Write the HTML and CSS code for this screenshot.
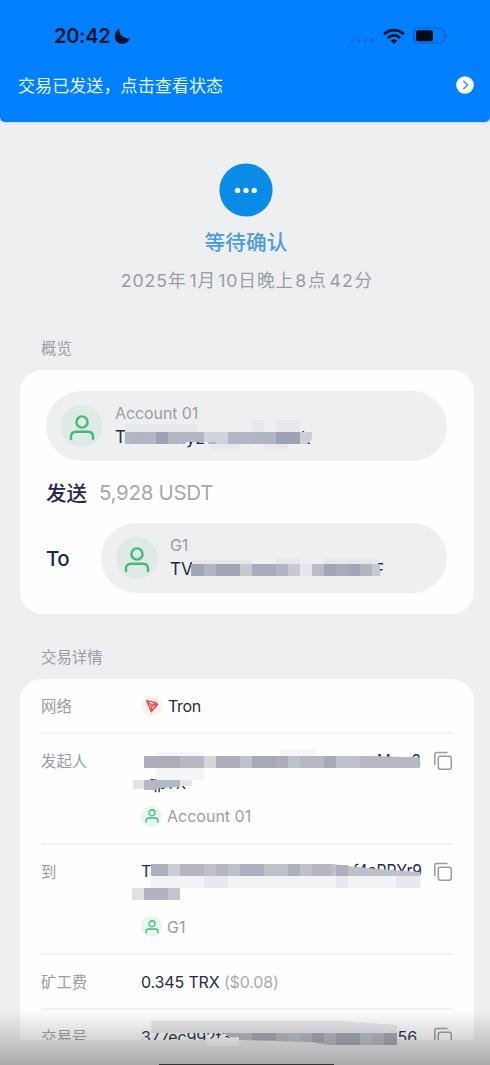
FILE: index.html
```html
<!DOCTYPE html>
<html lang="zh-CN">
<head>
<meta charset="utf-8">
<title>交易详情</title>
<link rel="stylesheet" href="styles.css">
</head>
<body>
<svg class="defs" width="0" height="0">
  <symbol id="user" viewBox="0 0 26 26"><g fill="none" stroke="currentColor" stroke-width="2.4" stroke-linecap="round"><circle cx="13" cy="7" r="5.6"/><path d="M2 24v-2.5c0-3 2-4.8 5-4.8h12c3 0 5 1.800 5 4.800v2.500"/></g></symbol>
  <symbol id="copy" viewBox="0 0 20 20"><g fill="none" stroke="#9a9ba0" stroke-width="1.5"><path d="M1.800 14V3.300q0-1.800 1.800-1.800H14.500"/><rect x="5.300" y="5.300" width="13" height="13" rx="2.200"/></g></symbol>
</svg>
<div class="screen">
  <header class="header">
    <div class="status">
      <div class="clock">20:42
        <svg width="17" height="17" viewBox="0 0 17 17"><path d="M5.200.8C4.800 6 9 11.200 16.200 10.300 14.500 14.200 11.500 16 8.300 16 4 16 .8 12.700.8 8.500.8 5 2.500 2.200 5.200.8Z" fill="#07142b"/></svg>
      </div>
      <div class="signals">
        <svg width="26" height="6" viewBox="0 0 26 6" fill="#0865c6"><circle cx="3" cy="3" r="1.700"/><circle cx="9.500" cy="3" r="1.700"/><circle cx="16.500" cy="3" r="1.700"/><circle cx="23" cy="3" r="1.700"/></svg>
        <svg class="wifi" width="22" height="17" viewBox="0 0 22 17"><g fill="none" stroke="#07142b" stroke-width="2.700"><path d="M1.200 6.200C6.700.8 15.300.8 20.800 6.200"/><path d="M4.800 10C8.300 6.600 13.700 6.600 17.200 10"/></g><path d="M7.700 12.500Q11 9.800 14.300 12.500L11 16Z" fill="#07142b"/></svg>
        <svg width="36" height="18" viewBox="0 0 36 18"><rect x="1" y="1.200" width="30.500" height="15" rx="4.700" fill="none" stroke="#075fc0" stroke-width="1.300"/><rect x="3" y="3.300" width="17" height="11" rx="2.500" fill="#030b18"/><path d="M33 6.300q2.300 2.500 0 5z" fill="#075fc0"/></svg>
      </div>
    </div>
    <div class="notice">
      <span class="notice-text">交易已发送，点击查看状态</span>
      <svg width="18" height="18" viewBox="0 0 18 18"><circle cx="9" cy="9" r="8.800" fill="#fff"/><path d="M7.300 4.800 11.500 9l-4.200 4.200" fill="none" stroke="#4295da" stroke-width="1.500"/></svg>
    </div>
  </header>

  <main class="main">
    <section class="state">
      <svg class="pending" width="54" height="54" viewBox="0 0 54 54"><circle cx="27" cy="27" r="26.600" fill="#0a8ce6"/><g fill="#fff"><circle cx="18.600" cy="27.400" r="2.600"/><circle cx="27" cy="27.400" r="2.600"/><circle cx="35.200" cy="27.400" r="2.600"/></g></svg>
      <h1 class="state-title">等待确认</h1>
      <p class="date"><span class="y">2025年</span><span class="m">1月</span><span class="d">10日</span><span class="e">晚上</span><span class="h">8</span><span class="p">点</span><span class="n">42</span><span>分</span></p>
    </section>

    <h2 class="section-title">概览</h2>
    <section class="card overview">
      <div class="pill">
        <span class="avatar"><svg width="26" height="26"><use href="#user"/></svg></span>
        <div class="party">
          <span class="name">Account 01</span>
          <span class="address">T
            <svg class="mask" width="204" height="36" viewBox="0 0 204 36">
              <text x="66" y="20" class="mask-text">.yz</text><text x="186" y="20" class="mask-text">k</text>
              <path d="M10 0h72v8H10zM137 -4h12v12h-12zM161 -4h24v12h-24zM95 20h30v5H95zM149 20h24v5h-24z" fill="#e7e7ed"/>
              <path d="M10 8h187v6l-4 4-3 2H93V18H72l-4 2H10z" fill="#b3b6c3"/>
              <path d="M17 8h12v12H17zM137 8h24v12h-24z" fill="#b0b5c6"/><path d="M41 8h12v12H41zM161 8h24v12h-24z" fill="#9da1b2"/>
              <path d="M89 8h12v10H89zM101 8h12v12h-12z" fill="#cfd2db"/><path d="M185 8h12v7l-5 5h-7z" fill="#cfced9"/>
            </svg>
          </span>
        </div>
      </div>
      <div class="amount-row"><b>发送</b><span class="amount">5,928 USDT</span></div>
      <div class="to-row">
        <b class="to">To</b>
        <div class="pill pill-to">
          <span class="avatar"><svg width="26" height="26"><use href="#user"/></svg></span>
          <div class="party">
            <span class="name">G1</span>
            <span class="address">TV
              <svg class="mask" width="216" height="36" viewBox="0 0 216 36">
                <text x="204" y="20" class="mask-text">F</text>
                <path d="M22 4h60v4H22zM106 3h24v5h-24zM154 3h54v5h-54z" fill="#e6e7ea"/>
                <path d="M21 8h189v12H21z" fill="#aaabba"/><path d="M34 8h12v12H34zM106 8h12v12h-12zM190 8h12v12h-12z" fill="#b3b5c3"/><path d="M22 8h12v12H22zM46 8h24v12H46zM154 8h12v12h-12zM178 8h12v12h-12z" fill="#a3a6b6"/><path d="M70 8h12v12H70zM118 8h12v12h-12zM202 8h8v12h-8z" fill="#c6c8d2"/><path d="M130 8h12v12h-12z" fill="#e5e5ea"/><path d="M142 8h12v12h-12z" fill="#bcbbc8"/>
              </svg>
            </span>
          </div>
        </div>
      </div>
    </section>

    <h2 class="section-title details-title">交易详情</h2>
    <section class="card details">
      <div class="row">
        <span class="label">网络</span>
        <div class="entry tron"><svg width="22" height="22" viewBox="0 0 22 22"><circle cx="11" cy="11" r="10.500" fill="#fdf0ed"/><path d="M5.600 5.700 14.300 7.300 16.800 9.200 10.300 16.700ZM5.600 5.700 11.100 10.700 16.800 9.200M14.300 7.300 11.100 10.700 10.300 16.700" fill="#edaaa5" stroke="#d85455" stroke-width="1.300" stroke-linejoin="round"/></svg><span class="dark">Tron</span></div>
      </div>
      <div class="row tall">
        <span class="label">发起人</span>
        <div class="value">
          <div class="hash">
            <svg class="mask" width="300" height="54" viewBox="0 0 300 54">
              <text x="236" y="18" class="mask-text" textLength="44" lengthAdjust="spacingAndGlyphs">Mxw3</text><text x="7" y="40" class="mask-text" textLength="38" lengthAdjust="spacingAndGlyphs">qpYK</text>
              <path d="M15 3h48v4H15zM15 19h36v12H15zM51 19h12v12H51zM139 0h36v7h-36z" fill="#f5f5f8"/>
              <path d="M3 7h230l46 1.500v10.500H3z" fill="#b7b8c4"/><path d="M3 7h36v12H3zM75 7h24v12H75zM135 7h12v12h-12z" fill="#adaeba"/><path d="M111 7h12v12h-12zM123 7h12v12h-12zM183 7h12v12h-12z" fill="#a8a9b8"/><path d="M63 7h12v12H63z" fill="#d4d5dd"/><path d="M99 7h12v12H99zM147 7h12v12h-12zM195 7h24v12h-24z" fill="#bfc2cc"/>
              <path d="M-8 31H3v9H-8zM39 31h12v6H39z" fill="#e3e3e8"/><path d="M3 31h36v7l-20 1-6 2H3z" fill="#b6b7c4"/>
            </svg>
          </div>
          <div class="entry owner"><span class="mini"><svg width="14" height="14"><use href="#user"/></svg></span><span>Account 01</span></div>
        </div>
        <svg class="copy" width="20" height="20"><use href="#copy"/></svg>
      </div>
      <div class="row tall">
        <span class="label">到</span>
        <div class="value">
          <div class="hash dark">T
            <svg class="mask" width="300" height="54" viewBox="0 0 300 54">
              <text x="212" y="17" class="mask-text" textLength="69" lengthAdjust="spacingAndGlyphs">f4aPPYr9</text>
              <path d="M10 16h270v12H10z" fill="#f3f3f5"/><path d="M63 16h24v12H63zM195 16h12v12h-12zM255 16h24v12h-24z" fill="#e9e9ed"/>
              <path d="M10 4h181l24 3 21 2 43 3v4H10z" fill="#bec0ca"/><path d="M10 4h17v12H10zM99 4h12v12H99zM111 4h12v12h-12zM147 4h12v12h-12zM195 5h12v11h-12z" fill="#adafbc"/><path d="M39 4h24v12H39zM75 4h12v12H75zM171 4h20v12h-20z" fill="#b6b6c3"/><path d="M27 4h12v12H27z" fill="#cbcdd4"/>
              <path d="M-9 28H3v12H-9z" fill="#e1e1e4"/><path d="M3 28h24v12H3z" fill="#b2b2c1"/><path d="M27 28h12v12H27z" fill="#c4c5ce"/>
            </svg>
          </div>
          <div class="entry owner"><span class="mini"><svg width="14" height="14"><use href="#user"/></svg></span><span>G1</span></div>
        </div>
        <svg class="copy" width="20" height="20"><use href="#copy"/></svg>
      </div>
      <div class="row">
        <span class="label">矿工费</span>
        <div class="fee"><span class="dark">0.345 TRX</span> <span class="fiat">($0.08)</span></div>
      </div>
      <div class="row last">
        <span class="label">交易号</span>
        <div class="value"><div class="hash dark txid"><span class="tx-start">377ec992f3d</span><span>56</span>
          <svg class="mask" width="300" height="54" viewBox="0 0 300 54">
            <path d="M10 -4h190l56 4v8H10z" fill="#e9e9ec"/><path d="M82 8h174v12H188l-18-3-72-2-8-3z" fill="#b5b6c1"/><path d="M66 14 98 12v9H66z" fill="#fdfdfe"/><path d="M111 8h24v7h-24zM171 8h12v9h-12zM195 8h24v12h-24zM243 8h13v12h-13z" fill="#a4a5b1"/><path d="M147 8h12v8h-12zM219 8h12v12h-12z" fill="#bfc1ca"/>
          </svg>
        </div></div>
        <svg class="copy" width="20" height="20"><use href="#copy"/></svg>
      </div>
    </section>
    <div class="dock"></div>
  </main>
  <div class="shade"><i class="home"></i></div>
</div>
</body>
</html>
```
FILE: styles.css
```css
* { box-sizing: border-box; }
body { margin: 0; background: #eeeff1; color: #9b9ba6; font-family: Inter, "Noto Sans CJK SC", sans-serif; }
.defs { display: block; position: absolute; }
.screen { position: relative; width: 490px; height: 1065px; overflow: hidden; display: flex; flex-direction: column; }
.header { flex: none; height: 122px; background: #007fff; border-radius: 0 0 5px 5px; box-shadow: 0 1px 2px #c9d1dc; }
.status { display: flex; justify-content: space-between; align-items: center; height: 60px; padding: 12px 41px 0 54px; }
.clock { display: flex; align-items: center; gap: 4px; color: #07142b; font-size: 20px; font-weight: 600; letter-spacing: -.3px; line-height: 24px; }
.signals { display: flex; align-items: center; gap: 7px; }
.signals svg:first-child { margin-top: 10px; }
.wifi { margin-right: 1px; margin-left: 1px; }
.notice { display: flex; align-items: center; justify-content: space-between; height: 50px; padding: 0 16px 0 18px; color: #e5f7ff; font-size: 17.1px; }
.notice-text { padding-bottom: 1px; }
.main { flex: 1; min-height: 0; display: flex; flex-direction: column; }
.state { display: flex; flex-direction: column; align-items: center; padding: 41px 0 0 2px; height: 210px; flex: none; }
.pending { display: block; }
.state-title { margin: 10px 0 0; font-size: 20.7px; line-height: 32px; font-weight: 500; color: #4b9cdf; }
.date { display: flex; margin: 8px 0 0 2px; font-size: 17.700px; line-height: 28px; letter-spacing: .9px; }
.y, .p { margin-right: 3px; }
.m { margin-right: 2px; }
.e, .h, .n { margin-right: 1px; }
.section-title { flex: none; height: 38px; padding: 5px 41px 0; margin: 0; font-size: 15.400px; line-height: 24px; font-weight: 400; }
.card { flex: none; margin: 0 16px 0 20px; background: #fefefe; border-radius: 22px; }
.overview { height: 244px; padding: 21px 27px 21px 26px; display: flex; flex-direction: column; }
.pill { display: flex; align-items: center; height: 70px; background: #eeeff1; border-radius: 35px; padding-left: 15px; gap: 12px; }
.avatar { display: grid; place-items: center; width: 42px; height: 42px; border-radius: 50%; background: #dfeae6; color: #45b978; padding-top: 4px; }
.party { display: flex; flex-direction: column; padding-top: 2px; }
.name { font-size: 16px; line-height: 21px; letter-spacing: -.1px; }
.address { position: relative; height: 27px; font-size: 17px; line-height: 27px; color: #252b4b; white-space: nowrap; }
.mask { position: absolute; left: 0; top: 0; overflow: visible; }
.mask-text { font-size: 17px; fill: #252b4b; }
.amount-row { display: flex; align-items: center; gap: 12px; height: 62px; }
b { font-weight: 500; font-size: 20.500px; color: #202750; }
.to { letter-spacing: -.6px; }
.amount { font-size: 20.500px; letter-spacing: -.3px; color: #a7a7ae; }
.to-row { display: flex; align-items: center; justify-content: space-between; }
.pill-to { width: 346px; }
.details-title { height: 65px; padding-top: 32px; }
.details { height: 361px; border-radius: 22px 22px 0 0; padding: 0 21px; }
.row { display: flex; height: 55px; padding-top: 15px; border-bottom: 2px solid #f2f2f4; font-size: 16px; line-height: 24px; }
.row.tall { height: 110.500px; }
.label { flex: none; width: 100px; padding-top: 1px; font-size: 15.400px; }
.entry { display: flex; align-items: center; height: 24px; gap: 5px; }
.tron { letter-spacing: -.35px; }
.fee { letter-spacing: -.15px; }
.dark { color: #252b43; }
.value { width: 294px; }
.hash { position: relative; height: 55px; line-height: 22px; white-space: nowrap; }
.txid { display: flex; justify-content: space-between; padding-right: 16px; line-height: 25px; letter-spacing: -.1px; }
.txid .mask { z-index: 2; }
.mini { display: grid; place-items: center; width: 21px; height: 21px; border-radius: 50%; background: #e5f8ee; color: #43b97e; }
.copy { flex: none; margin-top: 2px; }
.fiat { color: #aaaab1; }
.row.last { border: 0; }
.dock { position: relative; z-index: 1; flex: 1; background: #eeeff1; }
.shade { position: absolute; z-index: 3; left: 0; right: 0; bottom: 0; height: 55px; background: linear-gradient(rgba(80,80,80,0), rgba(80,80,80,.43)); }
.home { position: absolute; left: 159px; bottom: 0; width: 175px; height: 1px; background: #333; }
```
